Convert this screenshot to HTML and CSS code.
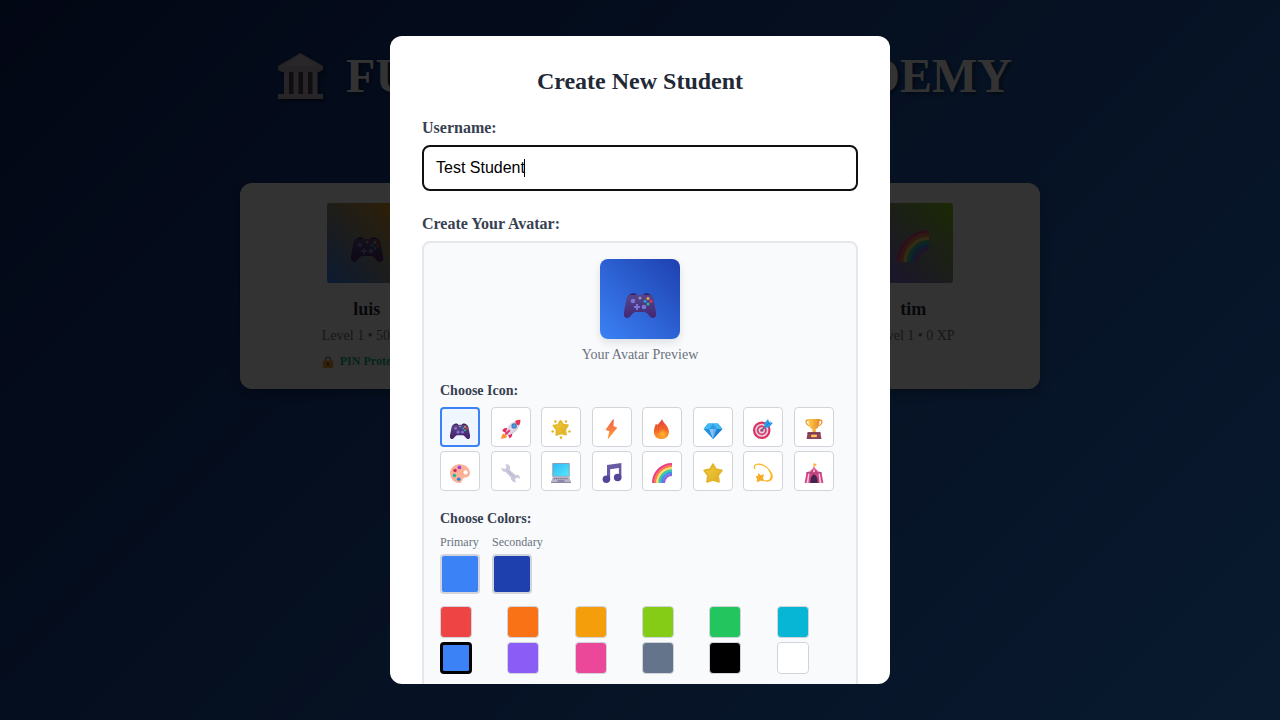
FILE: index.html
```html
<!DOCTYPE html>
<html lang="en">
<head>
<meta charset="utf-8">
<title>Fundamentals Academy</title>
<link rel="stylesheet" href="styles.css">
</head>
<body>
<svg class="defs" width="0" height="0" aria-hidden="true">
  <defs>
    <linearGradient id="gBolt" x1="0" y1="0" x2="0" y2="1"><stop offset="0" stop-color="#f25a48"/><stop offset="1" stop-color="#ffa13a"/></linearGradient>
    <linearGradient id="gFire" x1="0" y1="0" x2="0" y2="1"><stop offset="0" stop-color="#e0403a"/><stop offset=".55" stop-color="#f4692c"/><stop offset="1" stop-color="#ff9a2b"/></linearGradient>
    <radialGradient id="gEmber"><stop offset="0" stop-color="#ffb92a"/><stop offset="1" stop-color="#ffb92a" stop-opacity="0"/></radialGradient>
    <linearGradient id="gGold" x1="0" y1="0" x2="1" y2="1"><stop offset="0" stop-color="#f5d136"/><stop offset="1" stop-color="#dda829"/></linearGradient>
    <linearGradient id="gCup" x1="0" y1="0" x2="1" y2="0"><stop offset="0" stop-color="#ffcd45"/><stop offset="1" stop-color="#e58b2d"/></linearGradient>
    <linearGradient id="gPad" x1="0" y1="0" x2="0" y2="1"><stop offset="0" stop-color="#5b4386"/><stop offset="1" stop-color="#452069"/></linearGradient>
    <linearGradient id="gScreen" x1="0" y1="0" x2="1" y2="1"><stop offset="0" stop-color="#31b8f5"/><stop offset="1" stop-color="#50eafc"/></linearGradient>
    <symbol id="gamepad" viewBox="0 0 32 32">
      <path fill="#341a52" d="M4 11C5 7 12 5.500 13 9.500h6c1-4 8-2.500 9 1.500z"/>
      <path fill="url(#gPad)" d="M7 9h18c3 0 4 1.500 4.500 4L32 26c.6 4-.8 6-3 6-3.500 0-4.500-4.500-8-6H11c-3.500 1.500-4.500 6-8 6-2.200 0-3.600-2-3-6L2.500 13C3 10.500 4 9 7 9z"/>
      <circle cx="9" cy="15" r="2.300" fill="#8477d5"/><circle cx="20" cy="21" r="2.300" fill="#8477d5"/>
      <path fill="#8477d5" d="M12 18h2v2h2v2h-2v2h-2v-2h-2v-2h2z"/><circle cx="16" cy="12" r="1.500" fill="#a59aa8"/>
      <circle cx="24" cy="12.500" r="1.500" fill="#ffb02f"/><circle cx="27" cy="15.200" r="1.500" fill="#ef344c"/><circle cx="24" cy="18" r="1.500" fill="#24ca7f"/><circle cx="21" cy="15.200" r="1.500" fill="#21a9ee"/>
    </symbol>
    <symbol id="rocket" viewBox="0 0 32 32">
      <path fill="#ff9330" d="M4 23l6 5c-2 3-6 3-10 4 1-4 1-7 4-9z"/>
      <path fill="#e9285e" d="M2 19c2-5 6-5 10-4l5 5c2 5 1 8-3 11l-3-6-4-3z"/>
      <path fill="#dcd8e8" d="M8 21C10 11 17 3 31 1c-1 13-8 21-19 25z"/>
      <path fill="#e83255" d="M23 3c3-2 6-2 8-2 0 3 0 5-2 9-4 0-6-3-6-7z"/>
      <path fill="#c3bccf" d="M12 26C21 21 27 14 29 9c-2 9-9 14-17 17z"/>
      <circle cx="21" cy="11" r="4.300" fill="#526caa"/><circle cx="21" cy="11" r="2.700" fill="#39a8ed"/><path stroke="#e9285e" stroke-width="3" d="M7 25l7-7"/>
    </symbol>
    <symbol id="glow" viewBox="0 0 32 32">
      <path fill="url(#gGold)" stroke="#e3b82c" stroke-width="3" stroke-linejoin="round" d="M15 3l4.500 6 7.500 1-4.500 7 1.500 8-8-2-7.500 2.500L9 17l-5-6.500 7.500-1z"/>
      <g fill="#e8b22b"><circle cx="7" cy="4" r="2"/><circle cx="24" cy="4" r="2"/><circle cx="2.500" cy="20" r="2"/><circle cx="29.500" cy="20" r="2"/><path d="M13.500 28h5l-1.500 4h-2z"/></g>
    </symbol>
    <symbol id="bolt" viewBox="0 0 32 32"><path fill="url(#gBolt)" stroke="url(#gBolt)" stroke-width="1.500" stroke-linejoin="round" d="M18 1L6.500 17l6 2L10 31l13.500-17-6-2z"/></symbol>
    <symbol id="fire" viewBox="0 0 32 32"><path fill="url(#gFire)" d="M16 0c2 7 11 11 11 20 0 8-5 12-12 12S3 28 3 20c0-5 2-8 3-12l3 1c2-3 5-4 7-9z"/><path fill="none" stroke="#d85a2c" stroke-width="1.300" d="M7 9c-1 5 0 6-1 11M11 8c-1 5 0 7-1 11"/><ellipse cx="17" cy="24" rx="8" ry="8" fill="url(#gEmber)"/></symbol>
    <symbol id="gem" viewBox="0 0 32 32"><path fill="#2391de" d="M8 7h16l7 9-15 16L1 16z"/><path fill="#43b9f2" d="M8 7h16l7 9H1z"/><path fill="#2c9be6" d="M10 16l6-9 6 9-6 16z"/><path fill="#8dc4f2" d="M10 16h6v16z"/><path fill="#6baef0" d="M16 16h6l-6 16z"/><path fill="#1c7fd0" d="M22 16h9L16 32z"/></symbol>
    <symbol id="target" viewBox="0 0 32 32"><circle cx="14" cy="18" r="14" fill="#df3160"/><circle cx="14" cy="18" r="10.500" fill="#e3d3e3"/><circle cx="14" cy="18" r="8" fill="#d8406c"/><circle cx="14" cy="18" r="5" fill="#e3d3e3"/><circle cx="14" cy="18" r="2.500" fill="#b04a70"/><path stroke="#68528d" stroke-width="2" d="M14 18l10-10"/><path fill="#2b9be6" d="M18 7l6-7 2 5 6 1-6 7-7 1z"/><path stroke="#1d72bd" d="M20 12l8-8"/></symbol>
    <symbol id="trophy" viewBox="0 0 32 32"><path fill="none" stroke="#e79931" stroke-width="2.200" d="M8 2H5C2 2 3 10 9 11M24 2h3c3 0 2 8-4 9"/><path fill="url(#gCup)" d="M7 0h18c0 9-2 16-6.500 16l.5 6h-6l.5-6C9 16 7 9 7 0z"/><path fill="#8c4359" d="M6 21h20l2 11H4z"/><path fill="#7a3b52" d="M6 21h20l.6 3H5.400z"/><path fill="#ffc650" d="M11.500 25h9v4h-9z"/></symbol>
    <symbol id="palette" viewBox="0 0 32 32"><path fill="#fcb096" d="M13 2c10-1 18 5 19 13 0 6-4 8-8 8-6 0-3 9-9 9C6 32 0 24 0 16 0 9 6 3 13 2z"/><circle cx="25" cy="15" r="3.300" fill="#fff"/><circle cx="15" cy="7" r="3" fill="#9f3fe0"/><circle cx="8" cy="12" r="2.800" fill="#d42a58"/><circle cx="7" cy="20" r="2.800" fill="#20b8a5"/><circle cx="14" cy="26" r="2.900" fill="#2f82df"/></symbol>
    <symbol id="wrench" viewBox="0 0 32 32"><path fill="#cdc7db" d="M7 2c6-1 9 4 7 9l9 8c5-1 8 2 7 6l-4-2-4 3 2 5c-6 0-9-4-8-8l-9-9C3 15 0 11 1 7l4 3 4-3z"/><path stroke="#b1a9c3" stroke-width="1.200" d="M10 12l11 10"/></symbol>
    <symbol id="laptop" viewBox="0 0 32 32"><rect x="2" width="28" height="22" rx="1" fill="#8e9ab4"/><rect x="3.500" y="1.500" width="25" height="19" fill="url(#gScreen)"/><path fill="#b8b4c8" d="M3 22h26l3 8H0z"/><path stroke="#7b748f" stroke-width="2" stroke-dasharray="2 1" d="M5 25h22"/><path fill="#8f88a5" d="M11 27h10l1 3H10zM0 30h32v2H0z"/></symbol>
    <symbol id="music" viewBox="0 0 32 32"><path fill="#6a59a3" d="M8 3l23-3v25h-4V8L13 10v17H8z"/><circle cx="7" cy="26" r="6" fill="#54449a"/><circle cx="25" cy="23" r="6" fill="#54449a"/></symbol>
    <symbol id="rainbow" viewBox="0 0 32 32"><g fill="none" stroke-width="3.800"><path stroke="#e9408a" d="M1.900 32A30.100 30.100 0 0 1 32 1.900"/><path stroke="#fb7a50" d="M5 32A27 27 0 0 1 32 5"/><path stroke="#ffdb60" d="M8.500 32A23.500 23.500 0 0 1 32 8.500"/><path stroke="#39c8a5" d="M12 32A20 20 0 0 1 32 12"/><path stroke="#3b93ea" d="M15.500 32A16.500 16.500 0 0 1 32 15.500"/><path stroke="#9460d8" d="M19 32A13 13 0 0 1 32 19"/></g></symbol>
    <symbol id="star" viewBox="0 0 32 32"><path fill="url(#gGold)" stroke="#e3b52b" stroke-width="3" stroke-linejoin="round" d="M16 2l4.500 8L30 12l-6 8 1.500 10L16 27l-9.500 3L8 20l-6-8 9.500-2z"/></symbol>
    <symbol id="dizzy" viewBox="0 0 32 32"><path fill="none" stroke="#f9b52c" stroke-width="2" stroke-linecap="round" d="M3 9C-1-1 14 0 22 7"/><path fill="#fbb92e" d="M17 3c12 6 19 19 12 25-4 3-10 2-13-1 4 1 9 1 11-2 4-5-2-16-10-22z"/><path fill="#f6ab24" stroke="#f6ab24" stroke-width="1.500" stroke-linejoin="round" d="M9 17l3 3 5-1-2 5 2 4-5-.5L7 30v-5l-2-3.500 4-.5z"/></symbol>
    <symbol id="circus" viewBox="0 0 32 32"><path stroke="#f4a43b" stroke-width="1.500" d="M16 8V1"/><path fill="#ffab36" d="M16 0l5 3-5 2z"/><path fill="#db417f" d="M16 6c3 5 6 7 12 9l3 17H1l3-17c6-2 9-4 12-9z"/><path fill="#e3cfe6" d="M13.500 9L9 15 7 32H4l3-17zM18.500 9l4.500 6 2 17h3l-3-17zM16 7l2 9h-4z"/><path fill="#b4477f" d="M4 14.500h24V17H4z"/><path fill="#42264f" d="M16 18c4 2 6 6 6 14H10c0-8 2-12 6-14z"/></symbol>
    <symbol id="temple" viewBox="0 0 45 46">
      <path fill="#b9afba" d="M22.500 0L45 13v4l-4 2H4l-4-2v-4z"/><path fill="#cbc3cc" d="M22.500 2L40 13H5z"/>
      <path fill="#504050" d="M6 19h33v23H6z"/>
      <path fill="#c5bbc6" d="M6 19h5v22H6zm9.500 0h5v22h-5zm9.500 0h5v22h-5zm9.500 0h5v22h-5zM0 41h45v5H0z"/>
    </symbol>
    <symbol id="lock" viewBox="0 0 32 32"><path fill="none" stroke="#9b91ad" stroke-width="4" d="M9 15V9c0-8 14-8 14 0v6"/><rect x="2" y="12" width="28" height="20" rx="2" fill="#f3a033"/><path fill="#59305b" d="M16 17c4 0 3 4 2 5v4h-4v-4c-1-1-2-5 2-5z"/></symbol>
  </defs>
</svg>

<main class="page">
  <h1 class="title"><svg class="temple"><use href="#temple"/></svg><span>FUNDAMENTALS ACADEMY</span></h1>
  <section class="students">
    <article class="student">
      <div class="portrait portrait-luis"><svg><use href="#gamepad"/></svg></div>
      <h3>luis</h3><p>Level 1 • 50 XP</p>
      <div class="pin"><svg><use href="#lock"/></svg>PIN Protected</div>
    </article>
    <article class="student"></article>
    <article class="student">
      <div class="portrait portrait-tim"><svg><use href="#rainbow"/></svg></div>
      <h3>tim</h3><p>Level 1 • 0 XP</p>
    </article>
  </section>
</main>

<div class="overlay">
  <div class="modal">
    <h2>Create New Student</h2>
    <div class="field-label">Username:</div>
    <div class="input">Test Student<span class="caret"></span></div>
    <div class="field-label avatar-label">Create Your Avatar:</div>
    <div class="builder">
      <div class="preview"><svg><use href="#gamepad"/></svg></div>
      <div class="preview-text">Your Avatar Preview</div>
      <div class="group-label">Choose Icon:</div>
      <div class="icons">
        <button class="selected"><svg><use href="#gamepad"/></svg></button>
        <button><svg><use href="#rocket"/></svg></button>
        <button><svg><use href="#glow"/></svg></button>
        <button><svg><use href="#bolt"/></svg></button>
        <button><svg><use href="#fire"/></svg></button>
        <button><svg><use href="#gem"/></svg></button>
        <button><svg><use href="#target"/></svg></button>
        <button><svg><use href="#trophy"/></svg></button>
        <button><svg><use href="#palette"/></svg></button>
        <button><svg><use href="#wrench"/></svg></button>
        <button><svg><use href="#laptop"/></svg></button>
        <button><svg><use href="#music"/></svg></button>
        <button><svg><use href="#rainbow"/></svg></button>
        <button><svg><use href="#star"/></svg></button>
        <button><svg><use href="#dizzy"/></svg></button>
        <button><svg><use href="#circus"/></svg></button>
      </div>
      <div class="group-label colors-label">Choose Colors:</div>
      <div class="pair">
        <div><span>Primary</span><i class="well blue"></i></div>
        <div><span>Secondary</span><i class="well navy"></i></div>
      </div>
      <div class="swatches">
        <i class="red"></i><i class="orange"></i><i class="amber"></i><i class="lime"></i><i class="green"></i><i class="cyan"></i>
        <i class="blue chosen"></i><i class="violet"></i><i class="pink"></i><i class="slate"></i><i class="black"></i><i class="white"></i>
      </div>
    </div>
  </div>
</div>
</body>
</html>
```

FILE: styles.css
```css
* { box-sizing: border-box; }
body { margin: 0; height: 720px; overflow: hidden; font-family: "Liberation Serif", "Times New Roman", serif; }
h1, h2, h3, p { margin: 0; }
svg { display: block; }
.defs { position: absolute; }
.page { height: 720px; padding: 48px 240px 0; background: linear-gradient(135deg, #0f2368, #3087e6); background: linear-gradient(135deg, rgb(14, 36, 102), rgb(46, 130, 235)); }
.title { display: flex; align-items: center; justify-content: center; gap: 23px; height: 55px; margin: 0 -50px 80px; padding-left: 10px; color: #fff; font-size: 48px; line-height: 55px; white-space: nowrap; word-spacing: 4px; text-shadow: 2px 2px 4px rgba(0, 0, 0, .5); }
.temple { width: 45px; height: 46px; overflow: visible; filter: drop-shadow(2px 2px 2px rgba(0, 0, 0, .5)); }
.students { display: grid; grid-template-columns: repeat(3, 1fr); gap: 20px; height: 206px; }
.student { padding: 20px; border-radius: 12px; background: #fff; text-align: center; box-shadow: 0 4px 12px rgba(0, 0, 0, .3); }
.portrait { display: flex; align-items: flex-end; justify-content: center; width: 80px; height: 80px; margin: 0 auto 16px; padding-bottom: 21px; border-radius: 3px; }
.portrait svg { width: 32px; height: 32px; opacity: .9; }
.portrait-luis { background: linear-gradient(45deg, #3b82f6, #f59e0b); }
.portrait-tim { background: linear-gradient(45deg, #8b5cf6, #84cc16); }
.student h3 { color: #1f2937; font-size: 18px; line-height: 21px; }
.student p { margin-top: 8px; color: #6b7280; font-size: 14px; line-height: 16px; }
.pin { display: flex; align-items: flex-end; justify-content: center; gap: 6px; margin-top: 10px; padding-left: 1px; color: #10b981; font-size: 12px; font-weight: bold; line-height: 14px; }
.pin svg { width: 12px; height: 12px; }
.overlay { position: absolute; inset: 0; display: flex; align-items: center; justify-content: center; background: rgba(0, 0, 0, .8); }
.modal { width: 500px; height: 648px; padding: 32px; overflow: hidden; border-radius: 12px; background: #fff; }
.modal h2 { margin-bottom: 24px; color: #1f2937; font-size: 24px; line-height: 27px; text-align: center; }
.field-label { margin-bottom: 8px; color: #374151; font-size: 16px; font-weight: bold; line-height: 18px; }
.input { display: flex; align-items: center; height: 46px; padding: 0 12px; border: 2px solid #101010; border-radius: 8px; color: #000; font: 16px "Liberation Sans", Arial, sans-serif; }
.caret { width: 1px; height: 18px; margin-left: -1px; background: #000; }
.avatar-label { margin-top: 24px; }
.builder { height: 560px; padding: 16px; border: 2px solid #e5e7eb; border-radius: 8px; background: #f9fafb; }
.preview { display: flex; align-items: flex-end; justify-content: center; width: 80px; height: 80px; margin: 0 auto 8px; padding-bottom: 21px; border-radius: 8px; background: linear-gradient(45deg, #3b82f6, #1e40af); box-shadow: 0 4px 8px rgba(0, 0, 0, .1); }
.preview svg { width: 32px; height: 32px; opacity: .9; }
.preview-text { margin-bottom: 20px; color: #6b7280; font-size: 14px; line-height: 16px; text-align: center; }
.group-label { margin-bottom: 8px; color: #374151; font-size: 14px; font-weight: bold; line-height: 16px; }
.icons { display: grid; grid-template-columns: repeat(8, 1fr); gap: 4px; }
.icons button { display: flex; align-items: flex-end; justify-content: center; width: 40px; height: 40px; padding: 0 0 7px; border: 1px solid #d1d5db; border-radius: 4px; background: #fff; }
.icons button.selected { padding-bottom: 6px; border: 2px solid #3b82f6; background: #eff6ff; }
.icons svg { width: 20px; height: 20px; }
.colors-label { margin-top: 20px; }
.pair { display: flex; gap: 12px; margin-bottom: 12px; color: #6b7280; font-size: 12px; line-height: 14px; }
.pair span { display: block; margin-bottom: 5px; }
.well { display: block; width: 40px; height: 40px; border: 2px solid #d1d5db; border-radius: 4px; }
.swatches { display: grid; grid-template-columns: repeat(6, 1fr); gap: 4px; }
.swatches i { width: 32px; height: 32px; border: 1px solid #d1d5db; border-radius: 4px; }
.swatches .chosen { border: 3px solid #000; }
.red { background: #ef4444; } .orange { background: #f97316; } .amber { background: #f59e0b; }
.lime { background: #84cc16; } .green { background: #22c55e; } .cyan { background: #06b6d4; }
.blue { background: #3b82f6; } .navy { background: #1e40af; } .violet { background: #8b5cf6; }
.pink { background: #ec4899; } .slate { background: #64748b; } .black { background: #000; } .white { background: #fff; }
```
